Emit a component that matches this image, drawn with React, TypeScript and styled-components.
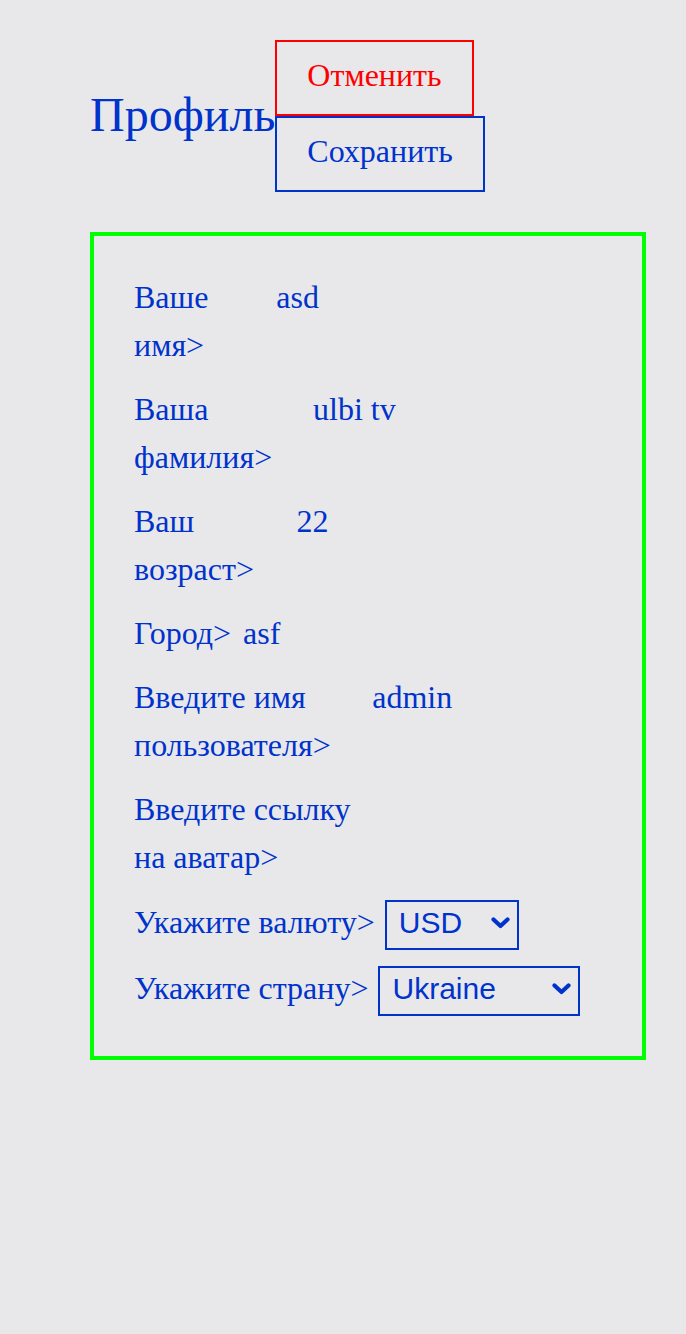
import React, { useState } from 'react';
import styled, { createGlobalStyle } from 'styled-components';

const GlobalStyle = createGlobalStyle`
  html, body {
    margin: 0;
    padding: 0;
    background: #e8e8ea;
  }
  body {
    font-family: "Liberation Serif", "Times New Roman", serif;
    font-size: 32px;
    line-height: 48px;
    color: #0033cc;
  }
`;

const Page = styled.div`
  padding: 40px 40px 40px 90px;
  min-height: 1334px;
  box-sizing: border-box;
`;

const Header = styled.div`
  display: flex;
  align-items: center;
`;

const Title = styled.h1`
  margin: 0 0 4px;
  font-size: 48px;
  font-weight: 400;
  line-height: 55px;
`;

const Buttons = styled.div`
  display: flex;
  flex-direction: column;
  align-items: flex-start;
`;

const Button = styled.button<{ $color: string }>`
  font-family: inherit;
  font-size: 32px;
  line-height: 36px;
  padding: 15px 30px 21px;
  margin: 0;
  border: 2px solid ${p => p.$color};
  color: ${p => p.$color};
  background: transparent;
  cursor: pointer;
`;

const Card = styled.div`
  margin-top: 40px;
  width: 556px;
  box-sizing: border-box;
  border: 4px solid #00ff00;
  padding: 37px 40px 42px;
  display: flex;
  flex-direction: column;
  gap: 16px;
`;

const Row = styled.div<{ $select?: boolean }>`
  display: flex;
  align-items: baseline;
  gap: 10px;
  margin-top: ${p => (p.$select ? '1px' : '0')};
`;

const Label = styled.span`
  flex: 0 1 auto;
`;

const Input = styled.input`
  flex: 0 1 auto;
  box-sizing: border-box;
  width: 383px;
  min-width: 0;
  height: 48px;
  padding: 0 2px;
  margin: 0;
  border: none;
  outline: none;
  background: transparent;
  font-family: inherit;
  font-size: 32px;
  line-height: 48px;
  color: #0033cc;
`;

const SelectWrap = styled.span<{ $width: number }>`
  position: relative;
  flex: none;
  display: inline-block;
  width: ${p => p.$width}px;
  height: 50px;
`;

const Select = styled.select`
  appearance: none;
  -webkit-appearance: none;
  width: 100%;
  height: 50px;
  box-sizing: border-box;
  margin: 0;
  padding: 0 30px 4px 12px;
  border: 2px solid #0033cc;
  border-radius: 0;
  background: transparent;
  font-family: "Liberation Sans", Arial, sans-serif;
  font-size: 30px;
  color: #0033cc;
  cursor: pointer;
`;

const Chevron = styled.svg`
  position: absolute;
  right: 9px;
  top: 19px;
  width: 19px;
  height: 12px;
  pointer-events: none;
`;

const ChevronIcon = () => (
  <Chevron viewBox="0 0 19 12">
    <path d="M2.5 2.5 L9.5 9 L16.5 2.5" fill="none" stroke="#0033cc" strokeWidth="4.2" strokeLinecap="round" strokeLinejoin="round" />
  </Chevron>
);

const fields = [
  { label: 'Ваше имя>', value: 'asd' },
  { label: 'Ваша фамилия>', value: 'ulbi tv' },
  { label: 'Ваш возраст>', value: '22' },
  { label: 'Город>', value: 'asf' },
  { label: 'Введите имя пользователя>', value: 'admin' },
  { label: 'Введите ссылку на аватар>', value: '' },
];

const App: React.FC = () => {
  const [currency, setCurrency] = useState('USD');
  const [country, setCountry] = useState('Ukraine');

  return (
    <Page>
      <GlobalStyle />
      <Header>
        <Title>Профиль</Title>
        <Buttons>
          <Button $color="#ff0000">Отменить</Button>
          <Button $color="#0033cc">Сохранить</Button>
        </Buttons>
      </Header>
      <Card>
        {fields.map(f => (
          <Row key={f.label}>
            <Label>{f.label}</Label>
            <Input defaultValue={f.value} />
          </Row>
        ))}
        <Row $select>
          <Label>Укажите валюту&gt;</Label>
          <SelectWrap $width={134}>
            <Select value={currency} onChange={e => setCurrency(e.target.value)}>
              <option value="USD">USD</option>
              <option value="EUR">EUR</option>
              <option value="RUB">RUB</option>
            </Select>
            <ChevronIcon />
          </SelectWrap>
        </Row>
        <Row>
          <Label>Укажите страну&gt;</Label>
          <SelectWrap $width={202}>
            <Select value={country} onChange={e => setCountry(e.target.value)}>
              <option value="Ukraine">Ukraine</option>
              <option value="Russia">Russia</option>
              <option value="Belarus">Belarus</option>
              <option value="Kazakhstan">Kazakhstan</option>
              <option value="Armenia">Armenia</option>
            </Select>
            <ChevronIcon />
          </SelectWrap>
        </Row>
      </Card>
    </Page>
  );
};

export default App;
